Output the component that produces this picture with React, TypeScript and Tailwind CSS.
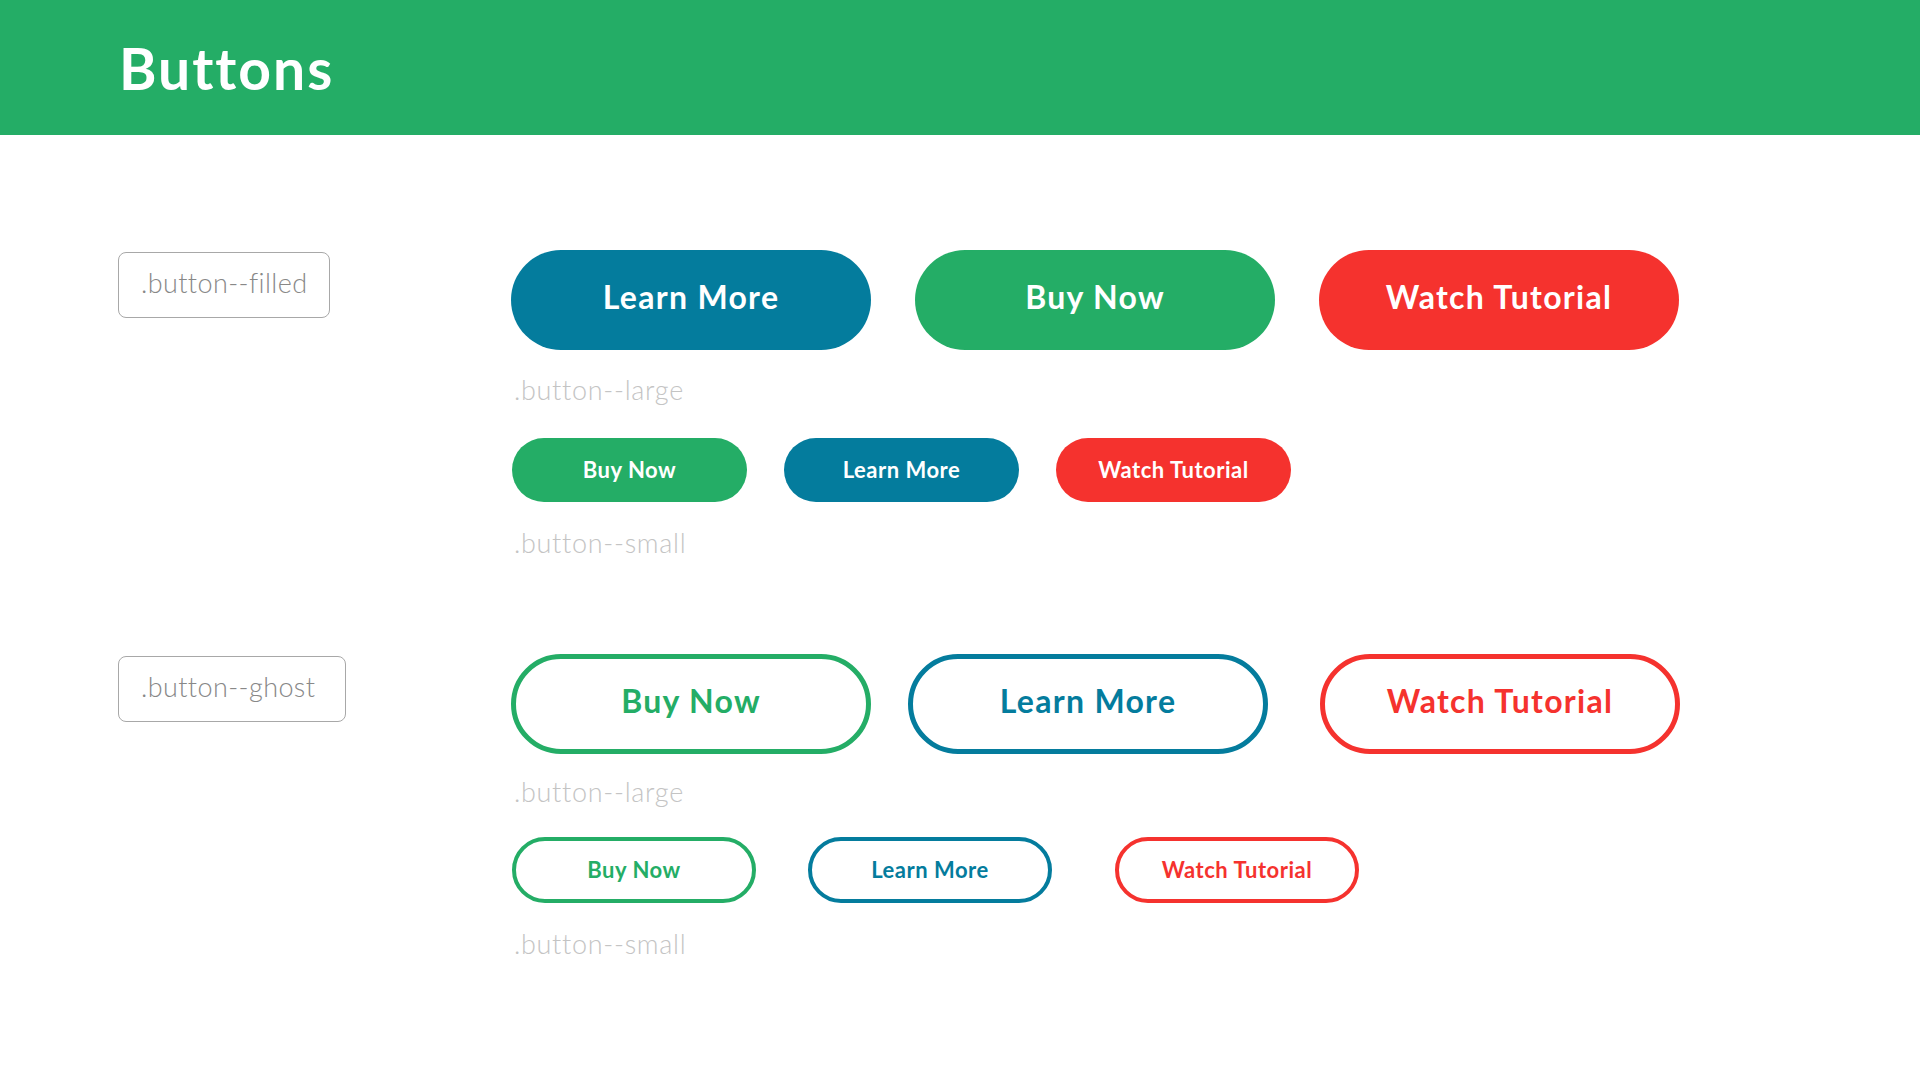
import React from "react";

type Tone = "green" | "blue" | "red";

const filledTone: Record<Tone, string> = {
  green: "bg-[#24ad66] text-white",
  blue: "bg-[#047c9d] text-white",
  red: "bg-[#f5322e] text-white",
};

const ghostTone: Record<Tone, string> = {
  green: "border-[#24ad66] text-[#24ad66]",
  blue: "border-[#047c9d] text-[#047c9d]",
  red: "border-[#f5322e] text-[#f5322e]",
};

function FilledButton({ tone, label, size }: { tone: Tone; label: string; size: "large" | "small" }) {
  return (
    <button
      className={
        size === "large"
          ? `flex h-[100px] w-[360px] items-center justify-center rounded-full pb-[6px] text-[32px] font-bold tracking-[1.3px] ${filledTone[tone]}`
          : `flex h-[64px] w-[235px] items-center justify-center rounded-full pb-[2px] text-[22px] font-bold tracking-[0.5px] ${filledTone[tone]}`
      }
    >
      {label}
    </button>
  );
}

function GhostButton({ tone, label, size }: { tone: Tone; label: string; size: "large" | "small" }) {
  return (
    <button
      className={
        size === "large"
          ? `flex h-[100px] w-[360px] items-center justify-center rounded-full border-[5px] bg-white pb-[6px] text-[32px] font-bold tracking-[1.3px] ${ghostTone[tone]}`
          : `flex h-[66px] w-[244px] items-center justify-center rounded-full border-4 bg-white pb-[2px] text-[22px] font-bold tracking-[0.5px] ${ghostTone[tone]}`
      }
    >
      {label}
    </button>
  );
}

function Caption({ children }: { children: string }) {
  return (
    <p className="h-[32px] pl-[3px] text-[27px] leading-[30px] font-light tracking-[0.7px] text-[#c4c4c4]">
      {children}
    </p>
  );
}

function Tag({ children, width }: { children: string; width: string }) {
  return (
    <div
      className={`flex h-[66px] ${width} items-center rounded-[8px] border border-[#a8a8a8] pb-[4px] pl-[22px] text-[27px] font-light tracking-[0.4px] text-[#888888]`}
    >
      {children}
    </div>
  );
}

export default function App() {
  return (
    <div className="min-h-screen bg-white" style={{ fontFamily: "Lato, 'Open Sans', sans-serif" }}>
      <header className="h-[135px] bg-[#24ad66] pt-[40px] pl-[119px]">
        <h1 className="text-[57px] leading-none font-bold tracking-[2px] text-white">Buttons</h1>
      </header>

      <main className="pt-[115px] pl-[118px]">
        {/* filled */}
        <section className="flex">
          <div className="w-[393px] pt-[2px]">
            <Tag width="w-[212px]">.button--filled</Tag>
          </div>
          <div className="flex flex-col">
            <div className="flex gap-[44px]">
              <FilledButton tone="blue" label="Learn More" size="large" />
              <FilledButton tone="green" label="Buy Now" size="large" />
              <FilledButton tone="red" label="Watch Tutorial" size="large" />
            </div>
            <div className="mt-[25px]">
              <Caption>.button--large</Caption>
            </div>
            <div className="mt-[31px] flex gap-[37px] pl-[1px]">
              <FilledButton tone="green" label="Buy Now" size="small" />
              <FilledButton tone="blue" label="Learn More" size="small" />
              <FilledButton tone="red" label="Watch Tutorial" size="small" />
            </div>
            <div className="mt-[26px]">
              <Caption>.button--small</Caption>
            </div>
          </div>
        </section>

        {/* ghost */}
        <section className="mt-[94px] flex">
          <div className="w-[393px] pt-[2px]">
            <Tag width="w-[228px]">.button--ghost</Tag>
          </div>
          <div className="flex flex-col">
            <div className="flex">
              <GhostButton tone="green" label="Buy Now" size="large" />
              <div className="ml-[37px]">
                <GhostButton tone="blue" label="Learn More" size="large" />
              </div>
              <div className="ml-[52px]">
                <GhostButton tone="red" label="Watch Tutorial" size="large" />
              </div>
            </div>
            <div className="mt-[23px]">
              <Caption>.button--large</Caption>
            </div>
            <div className="mt-[28px] flex pl-[1px]">
              <GhostButton tone="green" label="Buy Now" size="small" />
              <div className="ml-[52px]">
                <GhostButton tone="blue" label="Learn More" size="small" />
              </div>
              <div className="ml-[63px]">
                <GhostButton tone="red" label="Watch Tutorial" size="small" />
              </div>
            </div>
            <div className="mt-[26px]">
              <Caption>.button--small</Caption>
            </div>
          </div>
        </section>
      </main>
    </div>
  );
}
